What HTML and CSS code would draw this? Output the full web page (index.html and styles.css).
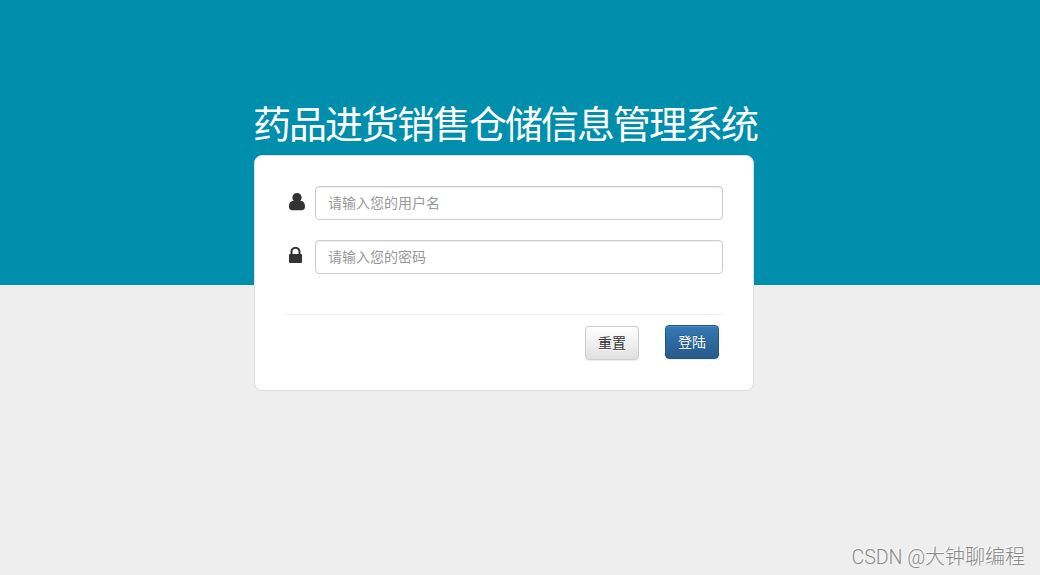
FILE: index.html
```html
<!DOCTYPE html>
<html lang="zh-CN">
<head>
    <meta charset="UTF-8">
    <title>药品进货销售仓储信息管理系统</title>
    <link rel="stylesheet" href="styles.css">
</head>
<body>
    <div class="container">
        <h1 class="title">药品进货销售仓储信息管理系统</h1>
        <form class="login-box">
            <div class="form-row">
                <label class="icon" for="username">
                    <svg width="16" height="18" viewBox="0 0 16 18">
                        <path d="M8 0C5.300 0 3.400 2 3.400 4.600c0 1.400.5 2.500 1.300 3.400C1.500 7.700 0 10 0 13.700c0 2.100 1.300 3.500 3.200 3.500h9.600c1.900 0 3.200-1.400 3.200-3.500 0-3.700-1.500-6-4.700-5.700.8-.9 1.300-2 1.300-3.400C12.600 2 10.700 0 8 0z"/>
                    </svg>
                </label>
                <input type="text" id="username" placeholder="请输入您的用户名">
            </div>
            <div class="form-row">
                <label class="icon" for="password">
                    <svg width="13" height="17" viewBox="0 0 13 17">
                        <path fill-rule="evenodd" d="M1.500 7V4.800C1.500 2 3.600 0 6.500 0S11.500 2 11.500 4.800V7h.5q1 0 1 1v7q0 1-1 1H1q-1 0-1-1V8q0-1 1-1zM3.500 7h6V4.800C9.500 3 8.300 1.800 6.500 1.800S3.500 3 3.500 4.800z"/>
                    </svg>
                </label>
                <input type="password" id="password" placeholder="请输入您的密码">
            </div>
            <div class="actions">
                <button type="reset" class="btn btn-reset">重置</button>
                <button type="button" class="btn btn-login">登陆</button>
            </div>
        </form>
    </div>
    <div class="watermark"><span class="site">CSDN @</span>大钟聊编程</div>
</body>
</html>
```
FILE: styles.css
```css
* {
    box-sizing: border-box;
}

body {
    margin: 0;
    height: 575px;
    overflow: hidden;
    font-family: "Noto Sans CJK SC", sans-serif;
    font-size: 14px;
    color: #333;
    background: linear-gradient(#008ead 285px, #eee 285px);
}

.container {
    width: 500px;
    margin-left: 254px;
    padding-top: 92px;
}

.title {
    margin: 0 0 3px -1px;
    height: 60px;
    line-height: 60px;
    font-size: 38px;
    font-weight: 400;
    letter-spacing: -2px;
    white-space: nowrap;
    color: #fff;
}

.login-box {
    height: 236px;
    padding: 30px;
    background-color: #fff;
    border: 1px solid #ddd;
    border-radius: 8px;
}

.form-row {
    display: flex;
    height: 34px;
    margin-bottom: 20px;
}

.icon {
    width: 30px;
    padding: 7px 0 0 4px;
}

.icon svg {
    display: block;
    fill: #333;
}

.form-row input {
    width: 408px;
    height: 34px;
    padding: 5px 12px 7px;
    font-family: inherit;
    font-size: 14px;
    border: 1px solid #ccc;
    border-radius: 4px;
    box-shadow: inset 0 1px 1px rgba(0, 0, 0, 0.075);
}

.form-row input::placeholder {
    color: #999;
}

.actions {
    display: flex;
    justify-content: flex-end;
    gap: 26px;
    margin-top: 40px;
    padding: 10px 4px 0 0;
    border-top: 1px solid #eee;
}

.btn {
    width: 54px;
    height: 34px;
    padding: 0 0 2px;
    font-family: inherit;
    font-size: 14px;
    line-height: 20px;
    border: 1px solid #ccc;
    border-radius: 4px;
    box-shadow: inset 0 1px 0 rgba(255, 255, 255, 0.15), 0 1px 1px rgba(0, 0, 0, 0.075);
}

.btn-reset {
    margin-top: 1px;
    color: #333;
    text-shadow: 0 1px 0 #fff;
    background: linear-gradient(#fff, #e0e0e0);
}

.btn-login {
    color: #fff;
    text-shadow: 0 -1px 0 rgba(0, 0, 0, 0.2);
    background: linear-gradient(#337ab7, #265a88);
    border-color: #245580;
}

.watermark {
    position: absolute;
    right: 15px;
    bottom: 2px;
    font-size: 20px;
    font-weight: 300;
    line-height: 30px;
    color: #888;
    text-shadow: -1px -1px 0 #fff;
}

.watermark .site {
    font-family: Roboto, sans-serif;
    font-size: 19.5px;
}
```
